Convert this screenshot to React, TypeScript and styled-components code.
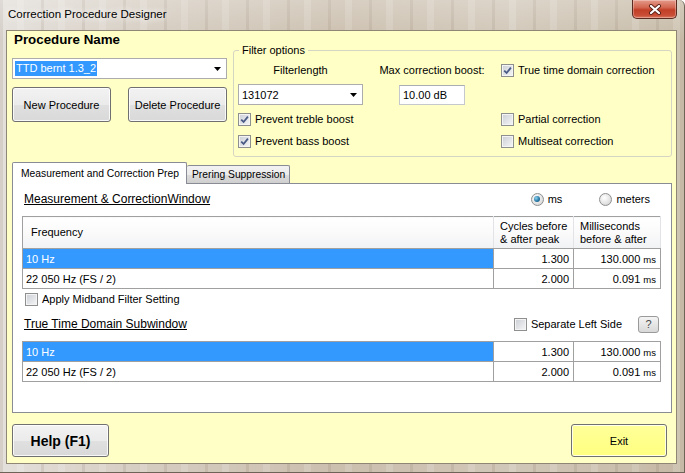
import React from 'react'
import styled, { createGlobalStyle } from 'styled-components'

const GlobalStyle = createGlobalStyle`
  html, body {
    margin: 0;
    padding: 0;
    background: #ffffff;
  }
  body {
    font-family: 'Liberation Sans', Arial, sans-serif;
    font-size: 11px;
    color: #000;
  }
  * {
    box-sizing: border-box;
  }
`

const Window = styled.div`
  width: 685px;
  height: 473px;
  display: flex;
  flex-direction: column;
  border-right: 1px solid #6d6457;
  border-bottom: 1px solid #6d6457;
  border-top-right-radius: 6px;
  background:
    linear-gradient(180deg, rgba(255, 255, 255, 0.25), rgba(255, 255, 255, 0) 40px),
    repeating-linear-gradient(
      90deg,
      rgba(110, 90, 70, 0.12) 0 3px,
      rgba(255, 255, 255, 0) 3px 17px,
      rgba(255, 255, 255, 0.14) 17px 24px,
      rgba(0, 0, 0, 0) 24px 41px
    ),
    linear-gradient(90deg, #e3dfda 0%, #d5ccc0 22%, #cbbfae 50%, #d1c7b8 75%, #c6baa6 100%);
`

const TitleBar = styled.div`
  flex: none;
  height: 30px;
  display: flex;
  align-items: flex-start;
  justify-content: space-between;
  padding-left: 8px;
`

const TitleText = styled.div`
  font-size: 11.5px;
  line-height: 29px;
  text-shadow: 0 0 6px #fff, 0 0 10px #fff;
`

const CloseButton = styled.div`
  width: 45px;
  height: 19px;
  margin-right: 7px;
  display: flex;
  align-items: center;
  justify-content: center;
  border: 1px solid #5b2a20;
  border-top: none;
  border-radius: 0 0 5px 5px;
  background: linear-gradient(180deg, #e59a8a 0%, #d2654f 42%, #c23f27 55%, #c94d35 85%, #dc7a62 100%);
  box-shadow: inset 0 0 0 1px rgba(255, 255, 255, 0.3);
`

const Client = styled.div`
  flex: 1;
  display: flex;
  flex-direction: column;
  margin: 0 7px 8px 6px;
  padding: 1px 4px 6px 5px;
  background: #ffffc6;
  border: 1px solid #8f8676;
`

const TopSection = styled.div`
  display: flex;
  align-items: flex-start;
`

const LeftColumn = styled.div`
  width: 215px;
  display: flex;
  flex-direction: column;
`

const Heading = styled.div`
  font-size: 13.33px;
  font-weight: bold;
  line-height: 16px;
  padding-left: 2px;
`

const Combo = styled.div<{ $mt?: number }>`
  height: 21px;
  margin-top: ${({ $mt }) => $mt ?? 0}px;
  display: flex;
  align-items: center;
  justify-content: space-between;
  padding: 0 5px 0 2px;
  background: #fff;
  border: 1px solid #acacac;
  font-size: 11px;
`

const SelectedText = styled.span`
  line-height: 15px;
  padding: 0 1px;
  background: #3399ff;
  color: #fff;
`

const PlainText = styled.span`
  padding-left: 1px;
`

const ButtonRow = styled.div`
  margin-top: 8px;
  display: flex;
  justify-content: space-between;
`

const Button = styled.div<{ $w: number; $h: number; $bold?: boolean; $yellow?: boolean }>`
  width: ${({ $w }) => $w}px;
  height: ${({ $h }) => $h}px;
  display: flex;
  align-items: center;
  justify-content: center;
  border: 1px solid #707070;
  border-radius: 3px;
  font-size: ${({ $bold }) => ($bold ? '14px' : '11px')};
  font-weight: ${({ $bold }) => ($bold ? 'bold' : 'normal')};
  background: ${({ $yellow }) =>
    $yellow
      ? 'linear-gradient(180deg, #ffff99 0%, #ffff80 100%)'
      : 'linear-gradient(180deg, #f2f2f2 0%, #ebebeb 50%, #e0e0e0 51%, #d9d9d9 100%)'};
  box-shadow: inset 0 0 0 1px rgba(255, 255, 255, 0.8);
`

const GroupBox = styled.fieldset`
  flex: 1;
  min-width: 0;
  margin: 12px 0 0 6px;
  padding: 5px 4px 7px 4px;
  border: 1px solid #d5d5c4;
  border-radius: 3px;
`

const Legend = styled.legend`
  margin-left: 1px;
  padding: 0 3px;
  font-size: 11px;
  line-height: 13px;
`

const OptionsGrid = styled.div`
  display: grid;
  grid-template-columns: 125px 106px 1fr;
  grid-template-rows: 16px 21px 16px 16px;
  column-gap: 16px;
  row-gap: 6px;
  align-items: center;
`

const CenterLabel = styled.div`
  text-align: center;
  font-size: 11px;
  line-height: 16px;
  white-space: nowrap;
`

const TextBox = styled.div`
  justify-self: center;
  width: 66px;
  height: 20px;
  display: flex;
  align-items: center;
  padding-left: 3px;
  background: #fff;
  border: 1px solid #c5c8cd;
  border-top-color: #abadb3;
  font-size: 11px;
`

const CheckLabel = styled.div`
  display: flex;
  align-items: center;
  gap: 4px;
  font-size: 11px;
  line-height: 16px;
  white-space: nowrap;
`

const Box = styled.span`
  flex: none;
  width: 13px;
  height: 13px;
  display: flex;
  align-items: center;
  justify-content: center;
  border: 1px solid #8e8f8f;
  background: linear-gradient(135deg, #cbcfd5 0%, #e4e6e9 60%, #f7f7f7 100%);
  box-shadow: inset 0 0 0 1px #f4f4f4;
`

const RadioCircle = styled.span<{ $on?: boolean }>`
  flex: none;
  width: 13px;
  height: 13px;
  display: flex;
  align-items: center;
  justify-content: center;
  border-radius: 50%;
  border: 1px solid #8e8f8f;
  background: radial-gradient(circle at 40% 35%, #ffffff 0%, #e2e2e2 60%, #c8c8c8 100%);

  &::after {
    content: '';
    display: ${({ $on }) => ($on ? 'block' : 'none')};
    width: 6px;
    height: 6px;
    border-radius: 50%;
    background: radial-gradient(circle at 35% 35%, #8ed4f2 0%, #2a7aa6 55%, #154b6e 100%);
  }
`

const Tabs = styled.div`
  margin-top: 5px;
  display: flex;
  flex-direction: column;
`

const TabStrip = styled.div`
  height: 21px;
  display: flex;
  align-items: flex-end;
  position: relative;
  z-index: 1;
`

const Tab = styled.div<{ $active?: boolean }>`
  height: ${({ $active }) => ($active ? '22px' : '18px')};
  margin-bottom: ${({ $active }) => ($active ? '-1px' : '0')};
  display: flex;
  align-items: center;
  padding: ${({ $active }) => ($active ? '0 7px 0 8px' : '0 4px 0 5px')};
  border: 1px solid #898c95;
  border-bottom: none;
  border-left-width: ${({ $active }) => ($active ? '1px' : '0')};
  border-radius: 2px 2px 0 0;
  background: ${({ $active }) =>
    $active ? '#fff' : 'linear-gradient(180deg, #f2f2f2 0%, #ebebeb 50%, #dddddd 51%, #cfcfcf 100%)'};
  font-size: 10.3px;
  white-space: nowrap;
`

const TabPage = styled.div`
  height: 230px;
  display: flex;
  flex-direction: column;
  padding: 7px 11px 0 9px;
  background: #fff;
  border: 1px solid #898c95;
`

const SectionRow = styled.div<{ $mt?: number; $h: number }>`
  height: ${({ $h }) => $h}px;
  margin-top: ${({ $mt }) => $mt ?? 0}px;
  display: flex;
  align-items: center;
  justify-content: space-between;
`

const SectionTitle = styled.div`
  padding-left: 2px;
  font-size: 12px;
  line-height: 16px;
  text-decoration: underline;
  white-space: nowrap;
`

const RadioGroup = styled.div`
  display: flex;
  gap: 37px;
  padding-right: 10px;
`

const RightControls = styled.div`
  display: flex;
  align-items: center;
  gap: 16px;
  padding-right: 1px;
`

const HelpBox = styled.div`
  width: 21px;
  height: 17px;
  display: flex;
  align-items: center;
  justify-content: center;
  border: 1px solid #9a9a9a;
  border-radius: 3px;
  background: linear-gradient(180deg, #f4f4f4 0%, #e6e6e6 50%, #d8d8d8 100%);
  color: #4a4a4a;
  font-size: 11px;
`

const Grid = styled.table<{ $mt: number }>`
  width: 100%;
  margin-top: ${({ $mt }) => $mt}px;
  border-collapse: collapse;
  table-layout: fixed;
  font-size: 11px;
  border: 1px solid #a0a0a0;
`

const Col = styled.col<{ $w: number }>`
  width: ${({ $w }) => $w}px;
`

const HeadCell = styled.th`
  height: 32px;
  padding: 0 0 0 6px;
  text-align: left;
  font-weight: normal;
  line-height: 13px;
  vertical-align: middle;
  background: linear-gradient(180deg, #ffffff 0%, #fafafb 50%, #f1f2f4 100%);
  border-right: 1px solid #e2e3e6;
  border-bottom: 1px solid #a0a0a0;

  &:first-child {
    padding-left: 8px;
  }
`

const Cell = styled.td<{ $selected?: boolean; $num?: boolean }>`
  height: 20px;
  padding: ${({ $num }) => ($num ? '0 4px 0 0' : '0 0 0 3px')};
  border: 1px solid #a0a0a0;
  text-align: ${({ $num }) => ($num ? 'right' : 'left')};
  white-space: nowrap;
  background: ${({ $selected }) => ($selected ? '#3399ff' : '#fff')};
  color: ${({ $selected }) => ($selected ? '#fff' : '#000')};
`

const Unit = styled.span`
  font-size: 9.5px;
`

const MidbandRow = styled.div`
  margin-top: 2px;
  padding-left: 3px;
`

const Footer = styled.div`
  margin-top: 11px;
  display: flex;
  justify-content: space-between;
  padding-right: 5px;
`

const CheckMark = () => (
  <svg width='9' height='9' viewBox='0 0 9 9'>
    <path d='M1.2 4.6 L3.6 7 L7.9 1.6' fill='none' stroke='#4a5c86' strokeWidth='1.8' />
  </svg>
)

const CloseIcon = () => (
  <svg width='14' height='11' viewBox='0 0 14 11'>
    <path d='M3 2 L11 9 M11 2 L3 9' stroke='#5a2017' strokeWidth='4' strokeLinecap='round' />
    <path d='M3 2 L11 9 M11 2 L3 9' stroke='#ffffff' strokeWidth='2.2' strokeLinecap='round' />
  </svg>
)

const DropArrow = () => (
  <svg width='7' height='4' viewBox='0 0 7 4'>
    <path d='M0 0 H7 L3.5 4 Z' fill='#000' />
  </svg>
)

const CheckBox: React.FC<{ label: string; checked?: boolean }> = ({ label, checked }) => (
  <CheckLabel>
    <Box>{checked && <CheckMark />}</Box>
    {label}
  </CheckLabel>
)

const Radio: React.FC<{ label: string; on?: boolean }> = ({ label, on }) => (
  <CheckLabel>
    <RadioCircle $on={on} />
    {label}
  </CheckLabel>
)

interface IRow {
  freq: string
  cycles: string
  ms: string
  selected?: boolean
}

const rows: IRow[] = [
  { freq: '10 Hz', cycles: '1.300', ms: '130.000', selected: true },
  { freq: '22 050 Hz (FS / 2)', cycles: '2.000', ms: '0.091' },
]

const DataRows = () => (
  <tbody>
    {rows.map((r) => (
      <tr key={r.freq}>
        <Cell $selected={r.selected}>{r.freq}</Cell>
        <Cell $num>{r.cycles}</Cell>
        <Cell $num>
          {r.ms} <Unit>ms</Unit>
        </Cell>
      </tr>
    ))}
  </tbody>
)

const Cols = () => (
  <colgroup>
    <Col $w={471} />
    <Col $w={80} />
    <Col $w={87} />
  </colgroup>
)

export default function App() {
  return (
    <>
      <GlobalStyle />
      <Window>
        <TitleBar>
          <TitleText>Correction Procedure Designer</TitleText>
          <CloseButton>
            <CloseIcon />
          </CloseButton>
        </TitleBar>
        <Client>
          <TopSection>
            <LeftColumn>
              <Heading>Procedure Name</Heading>
              <Combo $mt={10}>
                <SelectedText>TTD bernt 1.3_2</SelectedText>
                <DropArrow />
              </Combo>
              <ButtonRow>
                <Button $w={99} $h={35}>New Procedure</Button>
                <Button $w={99} $h={35}>Delete Procedure</Button>
              </ButtonRow>
            </LeftColumn>
            <GroupBox>
              <Legend>Filter options</Legend>
              <OptionsGrid>
                <CenterLabel>Filterlength</CenterLabel>
                <CenterLabel>Max correction boost:</CenterLabel>
                <CheckBox label='True time domain correction' checked />
                <Combo>
                  <PlainText>131072</PlainText>
                  <DropArrow />
                </Combo>
                <TextBox>10.00 dB</TextBox>
                <span />
                <CheckBox label='Prevent treble boost' checked />
                <span />
                <CheckBox label='Partial correction' />
                <CheckBox label='Prevent bass boost' checked />
                <span />
                <CheckBox label='Multiseat correction' />
              </OptionsGrid>
            </GroupBox>
          </TopSection>

          <Tabs>
            <TabStrip>
              <Tab $active>Measurement and Correction Prep</Tab>
              <Tab>Prering Suppression</Tab>
            </TabStrip>
            <TabPage>
              <SectionRow $h={16}>
                <SectionTitle>Measurement &amp; CorrectionWindow</SectionTitle>
                <RadioGroup>
                  <Radio label='ms' on />
                  <Radio label='meters' />
                </RadioGroup>
              </SectionRow>
              <Grid $mt={9}>
                <Cols />
                <thead>
                  <tr>
                    <HeadCell>Frequency</HeadCell>
                    <HeadCell>
                      Cycles before
                      <br />
                      &amp; after peak
                    </HeadCell>
                    <HeadCell>
                      Milliseconds
                      <br />
                      before &amp; after
                    </HeadCell>
                  </tr>
                </thead>
                <DataRows />
              </Grid>
              <MidbandRow>
                <CheckBox label='Apply Midband Filter Setting' />
              </MidbandRow>
              <SectionRow $h={18} $mt={8}>
                <SectionTitle>True Time Domain Subwindow</SectionTitle>
                <RightControls>
                  <CheckBox label='Separate Left Side' />
                  <HelpBox>?</HelpBox>
                </RightControls>
              </SectionRow>
              <Grid $mt={8}>
                <Cols />
                <DataRows />
              </Grid>
            </TabPage>
          </Tabs>

          <Footer>
            <Button $w={97} $h={33} $bold>Help (F1)</Button>
            <Button $w={96} $h={33} $yellow>Exit</Button>
          </Footer>
        </Client>
      </Window>
    </>
  )
}
